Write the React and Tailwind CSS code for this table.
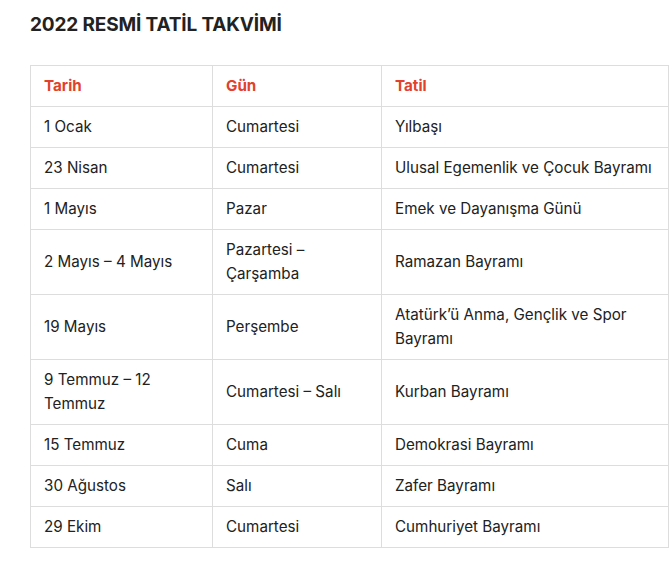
import React from "react";

const rows = [
  ["1 Ocak", "Cumartesi", "Yılbaşı"],
  ["23 Nisan", "Cumartesi", "Ulusal Egemenlik ve Çocuk Bayramı"],
  ["1 Mayıs", "Pazar", "Emek ve Dayanışma Günü"],
  ["2 Mayıs – 4 Mayıs", "Pazartesi – Çarşamba", "Ramazan Bayramı"],
  ["19 Mayıs", "Perşembe", "Atatürk’ü Anma, Gençlik ve Spor Bayramı"],
  ["9 Temmuz – 12 Temmuz", "Cumartesi – Salı", "Kurban Bayramı"],
  ["15 Temmuz", "Cuma", "Demokrasi Bayramı"],
  ["30 Ağustos", "Salı", "Zafer Bayramı"],
  ["29 Ekim", "Cumartesi", "Cumhuriyet Bayramı"],
];

export default function App() {
  return (
    <div className="min-h-[573px] bg-white pl-[30px] pr-[2px] pt-[13px] font-['Inter',sans-serif] text-[#222]">
      <h2 className="text-[19px] font-bold leading-6 tracking-[-0.15px] text-[#222]">2022 RESMİ TATİL TAKVİMİ</h2>
      <table className="mt-[28px] w-[638px] table-fixed border-collapse text-[15.2px] leading-6">
        <colgroup>
          <col className="w-[182px]" />
          <col className="w-[169px]" />
          <col className="w-[287px]" />
        </colgroup>
        <thead>
          <tr>
            {["Tarih", "Gün", "Tatil"].map((h) => (
              <th key={h} className="border border-[#ddd] px-[13px] py-2 text-left font-bold text-[#e2412c]">{h}</th>
            ))}
          </tr>
        </thead>
        <tbody>
          {rows.map((r) => (
            <tr key={r[0]}>
              {r.map((c, i) => (
                <td key={i} className="border border-[#ddd] px-[13px] py-2 align-middle text-[#222]">{c}</td>
              ))}
            </tr>
          ))}
        </tbody>
      </table>
    </div>
  );
}
